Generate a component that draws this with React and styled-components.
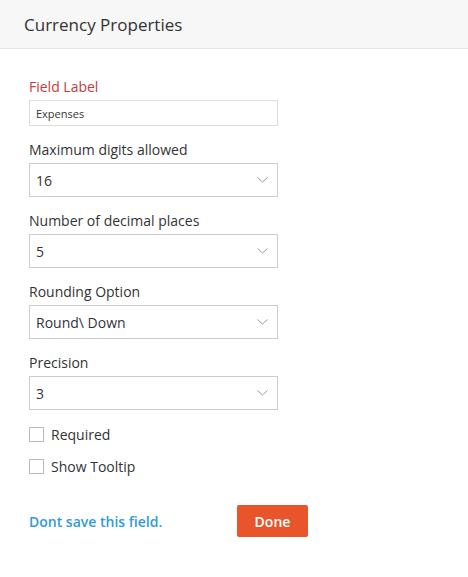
import React, { useState } from 'react'
import styled, { createGlobalStyle } from 'styled-components'

const GlobalStyle = createGlobalStyle`
  body {
    margin: 0;
    background: #ffffff;
    font-family: 'Open Sans', 'Lato', Arial, sans-serif;
    color: #333333;
  }
`

const Header = styled.header`
  height: 48px;
  background: #f7f7f7;
  border-bottom: 1px solid #e6e6e6;
  display: flex;
  align-items: center;
  padding: 0 24px;

  h1 {
    margin: 0;
    font-size: 17px;
    font-weight: 400;
    color: #333333;
  }
`

const Form = styled.div`
  padding: 28px 29px 0;
  width: 249px;
`

const Group = styled.div`
  margin-bottom: 14px;
`

const Label = styled.div`
  font-size: 14px;
  line-height: 20px;
  margin-bottom: 3px;
  color: ${(p) => (p.required ? '#c53a3c' : '#333333')};
`

const TextInput = styled.input`
  box-sizing: border-box;
  width: 100%;
  height: 26px;
  border: 1px solid #dddddd;
  padding: 0 6px;
  font-family: inherit;
  font-size: 11px;
  color: #333333;
  outline: none;
`

const SelectBox = styled.div`
  box-sizing: border-box;
  height: 34px;
  border: 1px solid #cccccc;
  display: flex;
  align-items: center;
  justify-content: space-between;
  padding: 0 9px 0 6px;
  font-size: 14px;
  color: #333333;

  svg {
    display: block;
  }
`

const CheckRow = styled.label`
  display: flex;
  align-items: center;
  gap: 7px;
  height: 20px;
  margin-bottom: 12px;
  font-size: 14px;
  color: #333333;
`

const Box = styled.span`
  box-sizing: border-box;
  width: 15px;
  height: 15px;
  border: 1px solid #bbbbbb;
  background: #ffffff;
`

const Footer = styled.div`
  display: flex;
  align-items: center;
  margin-top: 29px;
`

const Link = styled.a`
  flex-shrink: 0;
  width: 208px;
  font-size: 14px;
  font-weight: 600;
  color: #2f9bd8;
  text-decoration: none;
  cursor: pointer;
`

const DoneButton = styled.button`
  flex-shrink: 0;
  width: 71px;
  height: 32px;
  border: none;
  border-radius: 2px;
  background: #e8552a;
  color: #ffffff;
  font-family: inherit;
  font-size: 14px;
  font-weight: 600;
  cursor: pointer;
`

const Chevron = () => (
  <svg width="11" height="6" viewBox="0 0 11 6" fill="none">
    <path d="M0.5 0.5 L5.5 5 L10.5 0.5" stroke="#999999" strokeWidth="1" />
  </svg>
)

const selects = [
  { label: 'Maximum digits allowed', value: '16' },
  { label: 'Number of decimal places', value: '5' },
  { label: 'Rounding Option', value: 'Round\\ Down' },
  { label: 'Precision', value: '3' },
]

const App = () => {
  const [name, setName] = useState('Expenses')

  return (
    <>
      <GlobalStyle />
      <Header>
        <h1>Currency Properties</h1>
      </Header>
      <Form>
        <Group>
          <Label required>Field Label</Label>
          <TextInput value={name} onChange={(e) => setName(e.target.value)} />
        </Group>
        {selects.map((s) => (
          <Group key={s.label}>
            <Label>{s.label}</Label>
            <SelectBox>
              <span>{s.value}</span>
              <Chevron />
            </SelectBox>
          </Group>
        ))}
        <CheckRow>
          <Box />
          Required
        </CheckRow>
        <CheckRow>
          <Box />
          Show Tooltip
        </CheckRow>
        <Footer>
          <Link>Dont save this field.</Link>
          <DoneButton>Done</DoneButton>
        </Footer>
      </Form>
    </>
  )
}

export default App
